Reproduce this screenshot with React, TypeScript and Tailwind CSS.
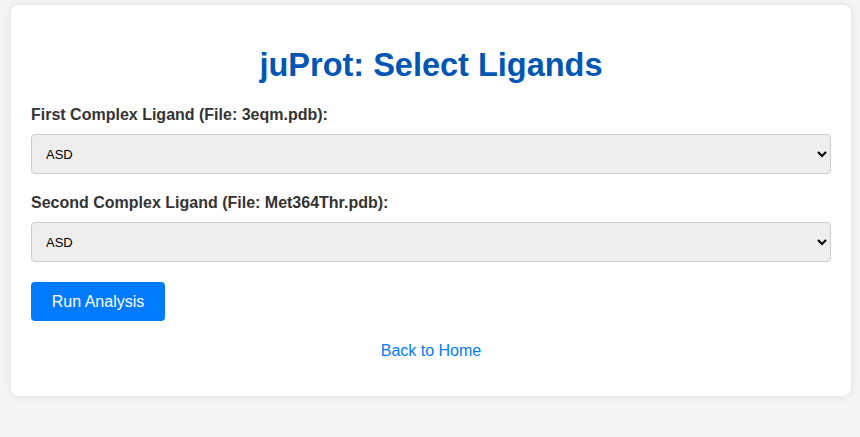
import React from 'react';

const ligands = ['ASD'];

export default function App() {
  return (
    <div className="min-h-screen bg-[#f4f5f4] pt-[5px] font-['Liberation_Sans',Arial,sans-serif] text-[#333]">
      <div className="ml-[11px] w-[840px] rounded-lg bg-white p-5 shadow-[0_0_10px_rgba(0,0,0,0.1)]">
        <h1 className="mt-[22px] mb-[22px] text-center text-[32.5px] font-bold leading-[37px] text-[#0056b3]">
          juProt: Select Ligands
        </h1>

        <label className="mb-[10px] block text-base font-bold leading-[18px]">
          First Complex Ligand (File: 3eqm.pdb):
        </label>
        <select className="mb-5 block h-[40px] w-full appearance-auto rounded border border-[#ccc] bg-[#eee] px-[10px] text-[13px] text-black">
          {ligands.map(l => (
            <option key={l}>{l}</option>
          ))}
        </select>

        <label className="mb-[10px] block text-base font-bold leading-[18px]">
          Second Complex Ligand (File: Met364Thr.pdb):
        </label>
        <select className="mb-5 block h-[40px] w-full appearance-auto rounded border border-[#ccc] bg-[#eee] px-[10px] text-[13px] text-black">
          {ligands.map(l => (
            <option key={l}>{l}</option>
          ))}
        </select>

        <button className="block w-[134px] rounded bg-[#007bff] py-[10px] text-center text-base leading-[19px] text-white hover:bg-[#0069d9]">
          Run Analysis
        </button>

        <p className="mt-[18px] mb-[13px] text-center">
          <a href="#" className="text-base text-[#007bff] hover:underline">
            Back to Home
          </a>
        </p>
      </div>
    </div>
  );
}
